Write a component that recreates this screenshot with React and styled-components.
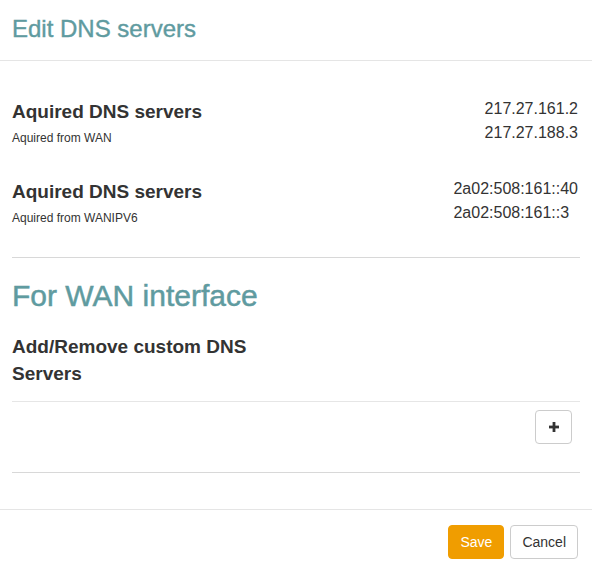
import styled, { createGlobalStyle } from "styled-components";

const GlobalStyle = createGlobalStyle`
  html, body {
    margin: 0;
    padding: 0;
    background: #fff;
  }
  body {
    font-family: "Liberation Sans", Arial, Helvetica, sans-serif;
    color: #333;
  }
`;

const Modal = styled.div`
  width: 592px;
  background: #fff;
`;

const Header = styled.div`
  padding: 16px 12px 18px;
  border-bottom: 1px solid #e5e5e5;
`;

const Title = styled.h4`
  margin: 0;
  font-size: 24px;
  line-height: 26px;
  font-weight: 400;
  color: #5f9ba0;
  -webkit-text-stroke: 0.4px #5f9ba0;
`;

const Body = styled.div`
  padding: 36px 12px 36px;
`;

const ServerRow = styled.div`
  display: flex;
  justify-content: space-between;
  align-items: flex-start;
  margin-bottom: 30px;
`;

const ServerInfo = styled.div`
  display: flex;
  flex-direction: column;
`;

const ServerTitle = styled.h5`
  margin: 4px 0 8px;
  font-size: 19px;
  line-height: 21px;
  font-weight: 700;
  color: #333;
`;

const ServerSub = styled.small`
  font-size: 12px;
  line-height: 17px;
  color: #333;
`;

const IpList = styled.ul`
  list-style: none;
  margin: 0 2px 0 0;
  padding: 0;
  font-size: 16px;
  line-height: 24px;
  text-align: left;
`;

const Divider = styled.hr`
  margin: ${(p) => p.$top || 0}px 0 0;
  border: 0;
  border-top: 1px solid #d8d8d8;
`;

const SectionTitle = styled.h3`
  margin: 21px 0 0;
  font-size: 30px;
  line-height: 33px;
  font-weight: 400;
  color: #5f9ba0;
  -webkit-text-stroke: 0.5px #5f9ba0;
`;

const CustomTitle = styled.h5`
  margin: 21px 0 14px;
  width: 260px;
  font-size: 19px;
  line-height: 27px;
  font-weight: 700;
  color: #333;
`;

const CustomTable = styled.div`
  display: flex;
  justify-content: flex-end;
  padding: 8px 8px 8px;
  border-top: 1px solid #e6e6e6;
  margin-bottom: 20px;
`;

const IconButton = styled.button`
  width: 37px;
  height: 34px;
  display: flex;
  align-items: center;
  justify-content: center;
  padding: 0;
  background: #fff;
  border: 1px solid #ccc;
  border-radius: 4px;
  color: #333;
  cursor: pointer;
`;

const Footer = styled.div`
  display: flex;
  justify-content: flex-end;
  gap: 6px;
  padding: 15px 14px 15px;
  border-top: 1px solid #e5e5e5;
`;

const Button = styled.button`
  height: 34px;
  padding: 6px 11px;
  font-family: "Liberation Sans", Arial, sans-serif;
  font-size: 14px;
  line-height: 20px;
  border-radius: 4px;
  cursor: pointer;
  border: 1px solid ${(p) => (p.$primary ? "#f09d00" : "#ccc")};
  background: ${(p) => (p.$primary ? "#f09d00" : "#fff")};
  color: ${(p) => (p.$primary ? "#fff" : "#333")};
`;

const PlusIcon = () => (
  <svg width="10" height="10" viewBox="0 0 10 10" aria-hidden="true">
    <rect x="3.6" y="0" width="2.8" height="10" fill="#333" />
    <rect x="0" y="3.6" width="10" height="2.8" fill="#333" />
  </svg>
);

const servers = [
  { id: "wan", source: "Aquired from WAN", ips: ["217.27.161.2", "217.27.188.3"] },
  { id: "wan6", source: "Aquired from WANIPV6", ips: ["2a02:508:161::40", "2a02:508:161::3"] },
];

const App = () => {
  return (
    <>
      <GlobalStyle />
      <Modal>
        <Header>
          <Title>Edit DNS servers</Title>
        </Header>
        <Body>
          {servers.map((s) => (
            <ServerRow key={s.id}>
              <ServerInfo>
                <ServerTitle>Aquired DNS servers</ServerTitle>
                <ServerSub>{s.source}</ServerSub>
              </ServerInfo>
              <IpList>
                {s.ips.map((ip) => (
                  <li key={ip}>{ip}</li>
                ))}
              </IpList>
            </ServerRow>
          ))}
          <Divider $top={29} />
          <SectionTitle>For WAN interface</SectionTitle>
          <CustomTitle>Add/Remove custom DNS Servers</CustomTitle>
          <CustomTable>
            <IconButton type="button">
              <PlusIcon />
            </IconButton>
          </CustomTable>
          <Divider />
        </Body>
        <Footer>
          <Button $primary type="button">Save</Button>
          <Button type="button">Cancel</Button>
        </Footer>
      </Modal>
    </>
  );
};

export default App;
